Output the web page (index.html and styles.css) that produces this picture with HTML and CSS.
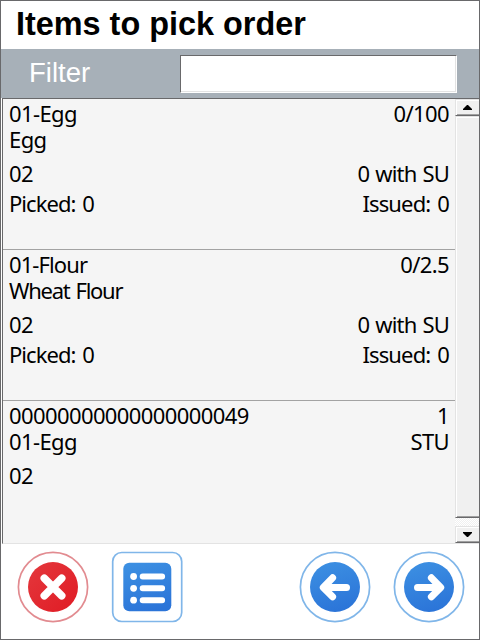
FILE: index.html
```html
<!DOCTYPE html>
<html lang="en">
<head>
<meta charset="utf-8">
<title>Items to pick order</title>
<link rel="stylesheet" href="styles.css">
</head>
<body>
<div class="window">
  <h1 class="title">Items to pick order</h1>
  <div class="filter">
    <label class="filter-label" for="filter">Filter</label>
    <input class="filter-input" id="filter" type="text">
  </div>
  <div class="list">
    <div class="items">
      <div class="item">
        <div class="line"><span>01-Egg</span><span>0/100</span></div>
        <div class="line"><span>Egg</span></div>
        <div class="line third"><span>02</span><span class="su">0 with SU</span></div>
        <div class="line fourth"><span class="picked">Picked: 0</span><span class="issued">Issued: 0</span></div>
      </div>
      <div class="item">
        <div class="line"><span class="code">01-Flour</span><span>0/2.5</span></div>
        <div class="line"><span class="name">Wheat Flour</span></div>
        <div class="line third"><span>02</span><span class="su">0 with SU</span></div>
        <div class="line fourth"><span class="picked">Picked: 0</span><span class="issued">Issued: 0</span></div>
      </div>
      <div class="item">
        <div class="line"><span>00000000000000000049</span><span>1</span></div>
        <div class="line"><span>01-Egg</span><span>STU</span></div>
        <div class="line third"><span>02</span></div>
      </div>
    </div>
    <div class="scrollbar">
      <div class="arrow"><svg width="9" height="5" viewBox="0 0 9 5"><path d="M4 0h1l4 4v1H0V4z"/></svg></div>
      <div class="thumb"></div>
      <div class="track"></div>
      <div class="arrow"><svg width="9" height="5" viewBox="0 0 9 5"><path d="M4 5h1l4-4V0H0v1z"/></svg></div>
    </div>
  </div>
  <div class="toolbar">
    <svg class="button" width="72" height="72" viewBox="0 0 72 72">
      <defs>
        <linearGradient id="red" x1="0" y1="0" x2="1" y2="1"><stop offset="0" stop-color="#e4383d"/><stop offset="1" stop-color="#e01b24"/></linearGradient>
        <linearGradient id="blue" x1=".3" y1="0" x2=".6" y2="1"><stop offset="0" stop-color="#3c8fe2"/><stop offset="1" stop-color="#2b74d8"/></linearGradient>
      </defs>
      <circle cx="36" cy="36" r="34.6" fill="#fff" stroke="#e28b90" stroke-width="1.7"/>
      <circle cx="36" cy="36" r="25" fill="url(#red)"/>
      <path d="M27.3 27.3l17.4 17.4M44.7 27.3L27.3 44.7" stroke="#fff" stroke-width="7.6" stroke-linecap="round"/>
    </svg>
    <svg class="button" width="72" height="72" viewBox="0 0 72 72">
      <rect x="1.7" y="1.5" width="69" height="69" rx="9" fill="#fff" stroke="#80b6e9" stroke-width="1.7"/>
      <rect x="12.3" y="11.7" width="48" height="48.5" rx="6" fill="url(#blue)"/>
      <g fill="#fff"><circle cx="22.6" cy="25.5" r="3.4"/><circle cx="22.6" cy="37.3" r="3.4"/><circle cx="22.6" cy="49.2" r="3.4"/></g>
      <path d="M31.7 25.4h19.4M31.7 37.3h19.4M31.7 49.2h19.4" stroke="#fff" stroke-width="6" stroke-linecap="round"/>
    </svg>
    <svg class="button previous" width="72" height="72" viewBox="0 0 72 72">
      <circle cx="36" cy="36" r="34.6" fill="#fff" stroke="#80b6e9" stroke-width="1.7"/>
      <circle cx="36" cy="36" r="25" fill="url(#blue)"/>
      <path d="M33.6 26.8L24.3 36.5l9.3 9.3M24.5 36.5h23" fill="none" stroke="#fff" stroke-width="7" stroke-linecap="round" stroke-linejoin="round"/>
    </svg>
    <svg class="button" width="72" height="72" viewBox="0 0 72 72">
      <circle cx="36" cy="36" r="34.6" fill="#fff" stroke="#80b6e9" stroke-width="1.7"/>
      <circle cx="36" cy="36" r="25" fill="url(#blue)"/>
      <path d="M38.4 26.8l9.3 9.7-9.3 9.3M47.5 36.5h-23" fill="none" stroke="#fff" stroke-width="7" stroke-linecap="round" stroke-linejoin="round"/>
    </svg>
  </div>
</div>
</body>
</html>
```
FILE: styles.css
```css
* { box-sizing: border-box; }
body { margin: 0; background: #fff; }
.window {
  width: 480px;
  height: 640px;
  display: flex;
  flex-direction: column;
  border: 1px solid #69696b;
  background: #fff;
  overflow: hidden;
}
.title {
  height: 48px;
  margin: 0;
  padding-left: 15px;
  font: bold 32.4px/46px "Liberation Sans", Arial, sans-serif;
  color: #000;
  white-space: nowrap;
}
.filter {
  height: 49px;
  display: flex;
  justify-content: space-between;
  padding: 6px 22px 0 28px;
  background: #a7b0b8;
}
.filter-label {
  font: 27.5px/36px "Liberation Sans", Arial, sans-serif;
  color: #fff;
}
.filter-input {
  width: 277px;
  height: 38px;
  padding: 0 4px;
  border: 1px solid #fff;
  border-top-color: #69696b;
  border-left-color: #69696b;
  outline: none;
  box-shadow: inset -1px -1px #e3e3e3;
  background: #fff;
}
.list {
  height: 446px;
  display: flex;
  margin-left: 1px;
  border-top: 1px solid #69696b;
  border-left: 1px solid #69696b;
  border-bottom: 1px solid #e3e3e3;
  background: #f5f5f5;
}
.items {
  width: 452px;
  font: 22px/26px "Noto Sans", Tahoma, sans-serif;
  letter-spacing: -.6px;
  color: #000;
}
.item {
  height: 151px;
  padding: 1px 6px 0 6px;
  border-bottom: 1px solid #a3a3a3;
}
.item:last-child { height: 142px; border: 0; }
.line {
  display: flex;
  justify-content: space-between;
  height: 26px;
  white-space: pre;
}
.third { margin-top: 8px; }
.fourth { margin-top: 4px; }
.code { letter-spacing: -.9px; }
.name { letter-spacing: -1.25px; word-spacing: 1.5px; }
.picked { letter-spacing: -.95px; word-spacing: 2px; }
.issued { letter-spacing: -.85px; word-spacing: 2px; }
.su { letter-spacing: -.8px; word-spacing: 1px; }
.scrollbar {
  width: 24px;
  display: flex;
  flex-direction: column;
  background: #f0f0f0;
}
.arrow, .thumb {
  border: 1px solid #e3e3e3;
  border-right: 0;
  border-bottom-color: #69696b;
  box-shadow: inset 1px 1px #fff, inset 0 -1px #a0a0a0;
}
.arrow {
  height: 17px;
  display: flex;
  align-items: center;
  justify-content: center;
}
.arrow svg { display: block; }
.thumb { height: 402px; }
.track {
  height: 8px;
  background: repeating-conic-gradient(#fff 0 25%, #f0f0f0 0 50%) 0 0 / 2px 2px;
}
.toolbar {
  display: flex;
  padding: 7px 14px 0 16px;
  gap: 22px;
}
.button { flex: none; }
.previous { margin-left: auto; }
```
